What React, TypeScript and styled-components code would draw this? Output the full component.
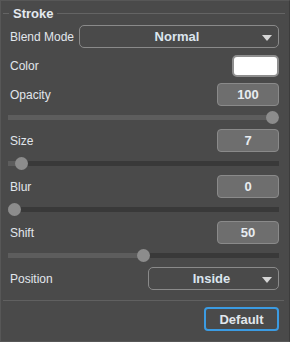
import React from 'react';
import styled, { createGlobalStyle } from 'styled-components';

const GlobalStyle = createGlobalStyle`
  html, body {
    margin: 0;
    padding: 0;
    background: #4a4a4a;
  }
  * {
    box-sizing: border-box;
  }
`;

const Panel = styled.div`
  width: 290px;
  height: 342px;
  background: #4a4a4a;
  border: 1px solid #575757;
  border-right-color: #3c3c3c;
  padding: 5px 10px 0 8px;
  display: flex;
  flex-direction: column;
  font-family: "Liberation Sans", Arial, sans-serif;
  color: #e1e6ec;
`;

const Legend = styled.div`
  height: 15px;
  margin: 0 -6px 4px -6px;
  display: flex;
  align-items: center;
  gap: 4px;

  &::before,
  &::after {
    content: '';
    height: 1px;
    background: #646464;
  }
  &::before {
    width: 6px;
  }
  &::after {
    flex: 1;
  }
`;

const LegendText = styled.span`
  font-size: 13px;
  font-weight: bold;
  color: #e4e9ef;
`;

const Row = styled.div<{ $gap?: number }>`
  height: 23px;
  display: flex;
  align-items: center;
  justify-content: space-between;
  margin-bottom: ${(p) => p.$gap ?? 0}px;
`;

const Label = styled.span`
  font-size: 12px;
  padding-left: 1px;
`;

const Select = styled.div<{ $width: number }>`
  width: ${(p) => p.$width}px;
  height: 23px;
  border: 1px solid #8a8a8a;
  border-radius: 5px;
  position: relative;
  display: flex;
  align-items: center;
  justify-content: center;
  font-size: 13px;
  font-weight: bold;
  color: #dbe5ee;
  padding-right: 4px;
`;

const Arrow = styled.span`
  position: absolute;
  right: 6px;
  top: 9px;
  width: 0;
  height: 0;
  border-left: 5px solid transparent;
  border-right: 5px solid transparent;
  border-top: 6px solid #d6d6d6;
`;

const Swatch = styled.div`
  width: 47px;
  height: 22px;
  border: 2px solid #8e8e8e;
  border-radius: 5px;
  background: #ffffff;
`;

const ValueBox = styled.div`
  width: 62px;
  height: 23px;
  background: #6e6e6e;
  border: 1px solid #8a8a8a;
  border-radius: 4px;
  display: flex;
  align-items: center;
  justify-content: center;
  font-size: 13px;
  font-weight: bold;
  color: #e8ecf0;
`;

const SliderRow = styled.div`
  height: 23px;
  position: relative;
  display: flex;
  align-items: center;
  margin: 0 0 0 -1px;
`;

const Track = styled.div`
  width: 100%;
  height: 5px;
  background: #393939;
  position: relative;
`;

const Fill = styled.div`
  position: absolute;
  left: 0;
  top: 0;
  bottom: 0;
  background: #5d5d5d;
`;

const Thumb = styled.div`
  position: absolute;
  top: 50%;
  width: 13px;
  height: 13px;
  margin: -6.5px 0 0 -6.5px;
  border-radius: 50%;
  background: #8c8c8c;
`;

const Separator = styled.div`
  height: 1px;
  background: #606060;
  margin: 10px -5px 6px -6px;
`;

const Footer = styled.div`
  display: flex;
  justify-content: flex-end;
`;

const DefaultButton = styled.button`
  width: 75px;
  height: 24px;
  background: #4a4a4a;
  border: 2px solid #3b9be2;
  border-radius: 4px;
  font-family: "Liberation Sans", Arial, sans-serif;
  font-size: 13px;
  font-weight: bold;
  color: #e1e6ec;
  padding: 0;
`;

const Slider: React.FC<{ pos: number }> = ({ pos }) => {
  // thumb travels between 6.5px and (width - 6.5px)
  const left = `calc(6.5px + (100% - 13px) * ${pos})`;
  return (
    <SliderRow>
      <Track>
        <Fill style={{ width: left }} />
        <Thumb style={{ left }} />
      </Track>
    </SliderRow>
  );
};

const sliders = [
  { label: 'Opacity', value: '100', pos: 1 },
  { label: 'Size', value: '7', pos: 0.029 },
  { label: 'Blur', value: '0', pos: 0 },
  { label: 'Shift', value: '50', pos: 0.5 },
];

const App: React.FC = () => {
  return (
    <>
      <GlobalStyle />
      <Panel>
        <Legend>
          <LegendText>Stroke</LegendText>
        </Legend>
        <Row $gap={6}>
          <Label>Blend Mode</Label>
          <Select $width={200}>
            Normal
            <Arrow />
          </Select>
        </Row>
        <Row $gap={6}>
          <Label>Color</Label>
          <Swatch />
        </Row>
        {sliders.map((s) => (
          <React.Fragment key={s.label}>
            <Row>
              <Label>{s.label}</Label>
              <ValueBox>{s.value}</ValueBox>
            </Row>
            <Slider pos={s.pos} />
          </React.Fragment>
        ))}
        <Row>
          <Label>Position</Label>
          <Select $width={131}>
            Inside
            <Arrow />
          </Select>
        </Row>
        <Separator />
        <Footer>
          <DefaultButton>Default</DefaultButton>
        </Footer>
      </Panel>
    </>
  );
};

export default App;
